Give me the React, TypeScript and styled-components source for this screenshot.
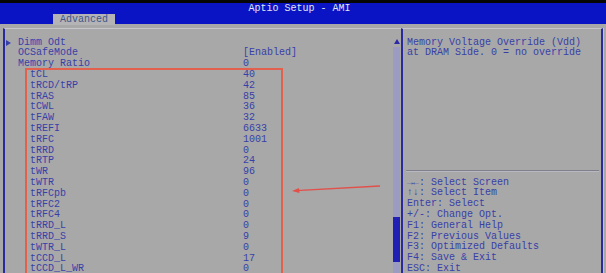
import React from 'react';
import styled, { createGlobalStyle } from 'styled-components';

const GlobalStyle = createGlobalStyle`
  html, body {
    margin: 0;
    padding: 0;
    background: #a8a8a8;
  }
  body {
    font-family: "Liberation Mono", "DejaVu Sans Mono", monospace;
  }
`;

const Screen = styled.div`
  position: relative;
  width: 606px;
  height: 273px;
  overflow: hidden;
  background: #a8a8a8;
  font-size: 10px;
  line-height: 10.8px;
  color: #3840a8;
`;

const TopBar = styled.header`
  height: 21px;
  border-top: 3px solid #060606;
  background: #0a14c4;
  display: flex;
  flex-direction: column;
`;

const Title = styled.div`
  height: 11px;
  line-height: 11px;
  text-align: center;
  padding-right: 7px;
  color: #e4e6f2;
`;

const TabRow = styled.div`
  display: flex;
  padding-left: 53px;
`;

const Tab = styled.div`
  height: 11px;
  line-height: 11px;
  padding: 0 7px;
  background: #b4b4b6;
  color: #3e5688;
`;

const Body = styled.main`
  display: flex;
  padding: 4px 0 0 3px;
`;

const LeftPanel = styled.section`
  width: 396px;
  height: 260px;
  display: flex;
  padding-top: 8.7px;
  border-top: 1px solid #c6c6ca;
  border-left: 2px solid #2a2a9c;
`;

const List = styled.div`
  flex: 1;
  display: flex;
  flex-direction: column;
`;

const Row = styled.div<{ $indent: number }>`
  display: flex;
  height: 10.8px;
  padding-left: ${(p) => p.$indent}px;
  white-space: pre;
`;

const Marker = styled.span`
  width: 13px;
  display: flex;
  align-items: center;
  padding-left: 1px;
  box-sizing: border-box;
`;

const Triangle = styled.span`
  width: 0;
  height: 0;
  border-top: 3px solid transparent;
  border-bottom: 3px solid transparent;
  border-left: 5px solid #3840a8;
`;

const Name = styled.span<{ $width: number }>`
  width: ${(p) => p.$width}px;
`;

const Value = styled.span``;

const Group = styled.div`
  position: relative;
  margin-left: 20px;
  width: 258px;
  display: flex;
  flex-direction: column;

  &::after {
    content: '';
    position: absolute;
    inset: -2px 0 -4px 0;
    border: 2px solid #e2604e;
    border-bottom: none;
    pointer-events: none;
  }
`;

const ScrollColumn = styled.div`
  width: 7px;
  margin-right: 1px;
  display: flex;
  flex-direction: column;
  align-items: center;
`;

const UpArrow = styled.span`
  margin-top: 1px;
  width: 0;
  height: 0;
  border-left: 3px solid transparent;
  border-right: 3px solid transparent;
  border-bottom: 5px solid #2a2aa8;
`;

const Track = styled.div`
  margin-top: 3px;
  width: 7px;
  flex: 1;
  background: #9c9cc2;
  padding-top: 170px;
  box-sizing: border-box;
`;

const Thumb = styled.div`
  height: 45px;
  background: #2020b4;
`;

const RightPanel = styled.aside`
  width: 198px;
  height: 260px;
  padding-top: 8.7px;
  border-top: 1px solid #c6c6ca;
  border-left: 2px solid #2a2a9c;
  border-right: 2px solid #2a2a9c;
  box-shadow: 1px 0 0 #c4c4d2;
  display: flex;
  flex-direction: column;
`;

const Description = styled.div`
  height: 132px;
  padding-left: 4px;
  white-space: pre;
`;

const Separator = styled.div`
  height: 1px;
  margin: 0 2px 0 3px;
  background: #80808c;
  box-shadow: 0 1px 0 #b8b8c0;
`;

const HelpList = styled.div`
  padding: 7px 0 0 4px;
  white-space: pre;
`;

const HelpLine = styled.div`
  height: 10.8px;
`;

const ArrowMark = styled.svg`
  position: absolute;
  left: 288px;
  top: 181px;
`;

type Item = { name: string; value: string };

const topItems: { name: string; value: string; submenu?: boolean }[] = [
  { name: 'Dimm Odt', value: '', submenu: true },
  { name: 'OCSafeMode', value: '[Enabled]' },
  { name: 'Memory Ratio', value: '0' },
];

const timings: Item[] = [
  { name: 'tCL', value: '40' },
  { name: 'tRCD/tRP', value: '42' },
  { name: 'tRAS', value: '85' },
  { name: 'tCWL', value: '36' },
  { name: 'tFAW', value: '32' },
  { name: 'tREFI', value: '6633' },
  { name: 'tRFC', value: '1001' },
  { name: 'tRRD', value: '0' },
  { name: 'tRTP', value: '24' },
  { name: 'tWR', value: '96' },
  { name: 'tWTR', value: '0' },
  { name: 'tRFCpb', value: '0' },
  { name: 'tRFC2', value: '0' },
  { name: 'tRFC4', value: '0' },
  { name: 'tRRD_L', value: '0' },
  { name: 'tRRD_S', value: '9' },
  { name: 'tWTR_L', value: '0' },
  { name: 'tCCD_L', value: '17' },
  { name: 'tCCD_L_WR', value: '0' },
];

const helpLines = [
  '\u2192\u2190: Select Screen',
  '\u2191\u2193: Select Item',
  'Enter: Select',
  '+/-: Change Opt.',
  'F1: General Help',
  'F2: Previous Values',
  'F3: Optimized Defaults',
  'F4: Save & Exit',
  'ESC: Exit',
];

const App = () => {
  return (
    <Screen>
      <GlobalStyle />
      <TopBar>
        <Title>Aptio Setup - AMI</Title>
        <TabRow>
          <Tab>Advanced</Tab>
        </TabRow>
      </TopBar>

      <Body>
        <LeftPanel>
          <List>
            {topItems.map((item) => (
              <Row key={item.name} $indent={0}>
                <Marker>{item.submenu && <Triangle />}</Marker>
                <Name $width={225}>{item.name}</Name>
                <Value>{item.value}</Value>
              </Row>
            ))}
            <Group>
              {timings.map((item) => (
                <Row key={item.name} $indent={5}>
                  <Name $width={213}>{item.name}</Name>
                  <Value>{item.value}</Value>
                </Row>
              ))}
            </Group>
          </List>
          <ScrollColumn>
            <UpArrow />
            <Track>
              <Thumb />
            </Track>
          </ScrollColumn>
        </LeftPanel>

        <RightPanel>
          <Description>
            {'Memory Voltage Override (Vdd)\nat DRAM Side. 0 = no override'}
          </Description>
          <Separator />
          <HelpList>
            {helpLines.map((line) => (
              <HelpLine key={line}>{line}</HelpLine>
            ))}
          </HelpList>
        </RightPanel>
      </Body>

      <ArrowMark width="96" height="14" viewBox="0 0 96 14">
        <line x1="92" y1="5" x2="8" y2="9.6" stroke="#e2504a" strokeWidth="1.4" />
        <polygon points="4,10 11,7 11.5,12" fill="#e2504a" />
      </ArrowMark>
    </Screen>
  );
};

export default App;
